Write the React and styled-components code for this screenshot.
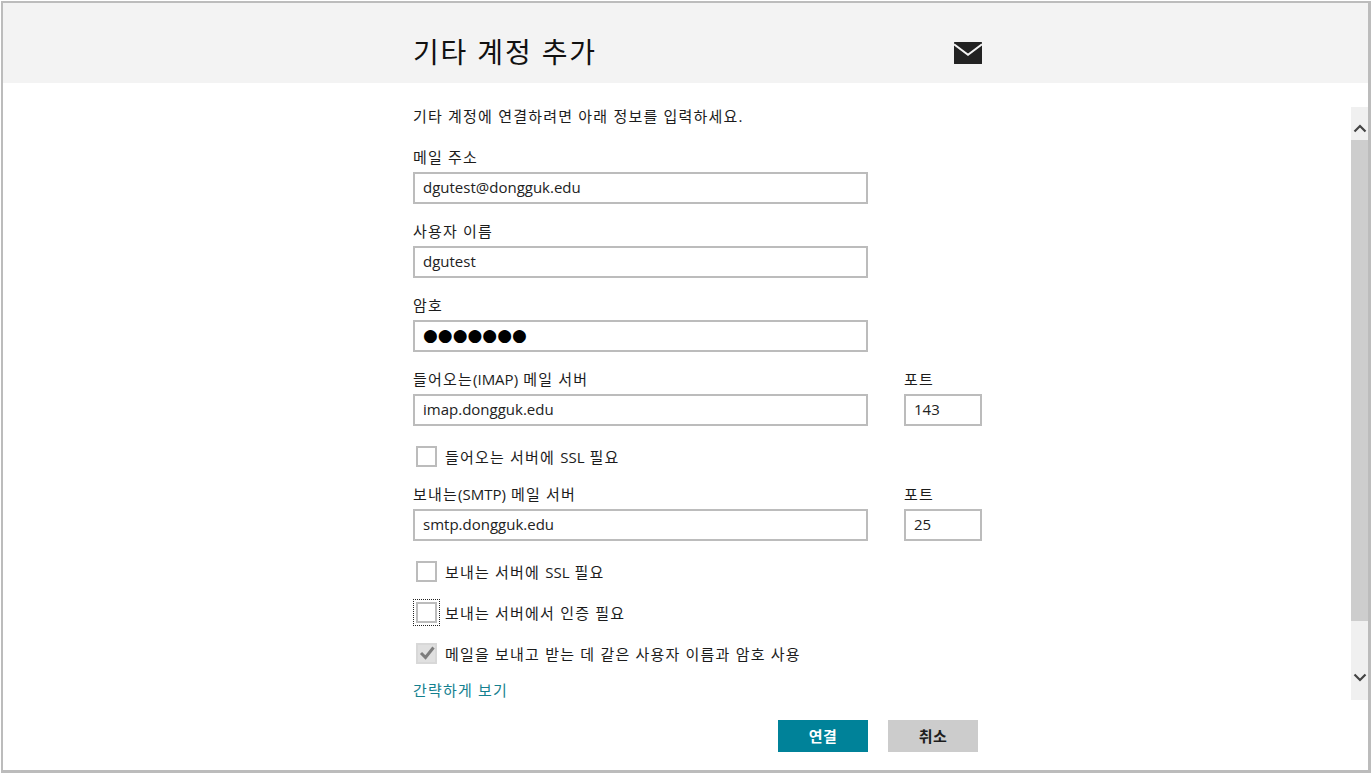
import styled, { createGlobalStyle } from "styled-components";

const GlobalStyle = createGlobalStyle`
  html, body {
    margin: 0;
    padding: 0;
    background: #fff;
  }
  body {
    font-family: "Open Sans", "Noto Sans CJK KR", sans-serif;
    color: #1c1c1c;
  }
`;

const MailIcon = () => (
  <svg width="28" height="22" viewBox="0 0 28 22">
    <rect width="28" height="22" rx="0.5" fill="#222" />
    <path fill="none" stroke="#f3f3f3" strokeWidth="2" d="M0 2.2l14 10.6L28 2.2" />
  </svg>
);

const Chevron = ({ down }) => (
  <svg width="14" height="9" viewBox="0 0 14 9">
    <path
      fill="none"
      stroke="#444"
      strokeWidth="2.2"
      d={down ? "M1.5 1.5L7 7l5.5-5.5" : "M1.5 7.5L7 2l5.5 5.5"}
    />
  </svg>
);

const CheckMark = () => (
  <svg width="16" height="14" viewBox="0 0 16 14">
    <path fill="none" stroke="#7d7d7d" strokeWidth="3" d="M2 7l4.5 4.5L14.5 1.5" />
  </svg>
);

const App = () => {
  return (
    <>
      <GlobalStyle />
      <Frame>
        <Header>
          <Title>기타 계정 추가</Title>
          <MailIcon />
        </Header>
        <Middle>
          <Form>
            <Intro>기타 계정에 연결하려면 아래 정보를 입력하세요.</Intro>
            <Field label="메일 주소" value="dgutest@dongguk.edu" />
            <Field label="사용자 이름" value="dgutest" />
            <Field label="암호" value="●●●●●●●" secret />
            <ServerRow>
              <Field
                label={
                  <>
                    들어오는<Latin>(IMAP)</Latin> 메일 서버
                  </>
                }
                value="imap.dongguk.edu"
              />
              <Field label="포트" value="143" short />
            </ServerRow>
            <CheckGroup>
              <Check
                label={
                  <>
                    들어오는 서버에 <Latin>SSL</Latin> 필요
                  </>
                }
              />
            </CheckGroup>
            <ServerRow>
              <Field
                label={
                  <>
                    보내는<Latin>(SMTP)</Latin> 메일 서버
                  </>
                }
                value="smtp.dongguk.edu"
              />
              <Field label="포트" value="25" short />
            </ServerRow>
            <CheckGroup>
              <Check
                label={
                  <>
                    보내는 서버에 <Latin>SSL</Latin> 필요
                  </>
                }
              />
              <Check label="보내는 서버에서 인증 필요" focused />
              <Check label="메일을 보내고 받는 데 같은 사용자 이름과 암호 사용" checked />
              <LessLink>간략하게 보기</LessLink>
            </CheckGroup>
          </Form>
          <ScrollBar>
            <ScrollEnd $pad={17}>
              <Chevron />
            </ScrollEnd>
            <ScrollThumb />
            <ScrollRest />
            <ScrollEnd $pad={6}>
              <Chevron down />
            </ScrollEnd>
          </ScrollBar>
        </Middle>
        <Footer>
          <Button $primary>연결</Button>
          <Button>취소</Button>
        </Footer>
      </Frame>
    </>
  );
};

const Field = ({ label, value, short, secret }) => (
  <FieldWrap $short={short}>
    <Label>{label}</Label>
    <TextBox $secret={secret}>{value}</TextBox>
  </FieldWrap>
);

const Check = ({ label, checked, focused }) => (
  <CheckRow>
    <FocusRing $focused={focused}>
      <CheckBox $checked={checked}>{checked && <CheckMark />}</CheckBox>
    </FocusRing>
    <CheckLabel>{label}</CheckLabel>
  </CheckRow>
);

export default App;

// Styled components
const Frame = styled.div`
  box-sizing: border-box;
  width: 1370px;
  height: 772px;
  margin: 1px 0 0 1px;
  display: flex;
  flex-direction: column;
  border: solid #bcbcbc;
  border-width: 2px 3px 3px 2px;
  overflow: hidden;
`;

const Header = styled.div`
  flex: none;
  height: 80px;
  background: #f3f3f3;
  display: flex;
  align-items: center;
  justify-content: space-between;
  box-sizing: border-box;
  padding: 19px 386px 0 410px;
`;

const Title = styled.h1`
  margin: 0;
  padding-bottom: 3px;
  font-size: 28px;
  font-weight: 400;
  letter-spacing: 1.85px;
  color: #111;
`;

const Latin = styled.span`
  letter-spacing: 0;
`;

const Middle = styled.div`
  flex: 1;
  min-height: 0;
  display: flex;
  justify-content: space-between;
`;

const Form = styled.div`
  width: 569px;
  margin-left: 410px;
  padding-top: 22px;
`;

const Intro = styled.div`
  font-size: 15px;
  line-height: 22px;
  letter-spacing: 1.2px;
  margin-bottom: 20px;
`;

const FieldWrap = styled.div`
  width: ${(p) => (p.$short ? "78px" : "455px")};
  margin-bottom: 17px;
`;

const Label = styled.div`
  font-size: 15px;
  line-height: 20px;
  letter-spacing: 1.2px;
  margin-bottom: 5px;
  white-space: nowrap;
`;

const TextBox = styled.div`
  box-sizing: border-box;
  height: 32px;
  border: 2px solid #bcbcbc;
  padding: 0 8px;
  font-size: ${(p) => (p.$secret ? "17px" : "15px")};
  line-height: 27px;
  color: ${(p) => (p.$secret ? "#000" : "#222")};
  font-family: ${(p) => (p.$secret ? '"DejaVu Sans", sans-serif' : "inherit")};
`;

const ServerRow = styled.div`
  display: flex;
  justify-content: space-between;
`;

const CheckGroup = styled.div`
  display: flex;
  flex-direction: column;
  gap: 19px;
  padding-top: 2px;
  margin-bottom: 17px;
`;

const CheckRow = styled.div`
  display: flex;
  align-items: center;
  height: 22px;
`;

const FocusRing = styled.div`
  box-sizing: border-box;
  width: 27px;
  height: 27px;
  flex: none;
  display: flex;
  align-items: center;
  justify-content: center;
  outline: ${(p) => (p.$focused ? "1px dotted #222" : "none")};
  outline-offset: -1px;
`;

const CheckBox = styled.div`
  box-sizing: border-box;
  width: 21px;
  height: 21px;
  border: 2px solid ${(p) => (p.$checked ? "#d8d8d8" : "#bcbcbc")};
  background: ${(p) => (p.$checked ? "#e0e0e0" : "#fff")};
  display: flex;
  align-items: center;
  justify-content: center;
`;

const CheckLabel = styled.span`
  margin-left: 5px;
  font-size: 15px;
  letter-spacing: 1.2px;
  white-space: nowrap;
`;

const LessLink = styled.a`
  display: block;
  font-size: 15px;
  line-height: 22px;
  letter-spacing: 1.2px;
  color: #14808f;
  margin-top: -4px;
`;

const ScrollBar = styled.div`
  flex: none;
  width: 17px;
  height: 593px;
  margin-top: 24px;
  background: #f0f0f0;
  display: flex;
  flex-direction: column;
`;

const ScrollEnd = styled.div`
  flex: none;
  box-sizing: border-box;
  height: 33px;
  padding-top: ${(p) => p.$pad}px;
  display: flex;
  align-items: flex-start;
  justify-content: center;
`;

const ScrollThumb = styled.div`
  flex: none;
  height: 481px;
  background: #cdcdcd;
`;

const ScrollRest = styled.div`
  flex: 1;
`;

const Footer = styled.div`
  flex: none;
  height: 60px;
  display: flex;
  gap: 20px;
  box-sizing: border-box;
  padding: 10px 0 0 775px;
`;

const Button = styled.button`
  width: 90px;
  height: 32px;
  padding: 0 0 2px;
  border: none;
  font-family: inherit;
  font-size: 15px;
  font-weight: 700;
  letter-spacing: 0.5px;
  background: ${(p) => (p.$primary ? "#008299" : "#cccccc")};
  color: ${(p) => (p.$primary ? "#fff" : "#1c1c1c")};
`;
